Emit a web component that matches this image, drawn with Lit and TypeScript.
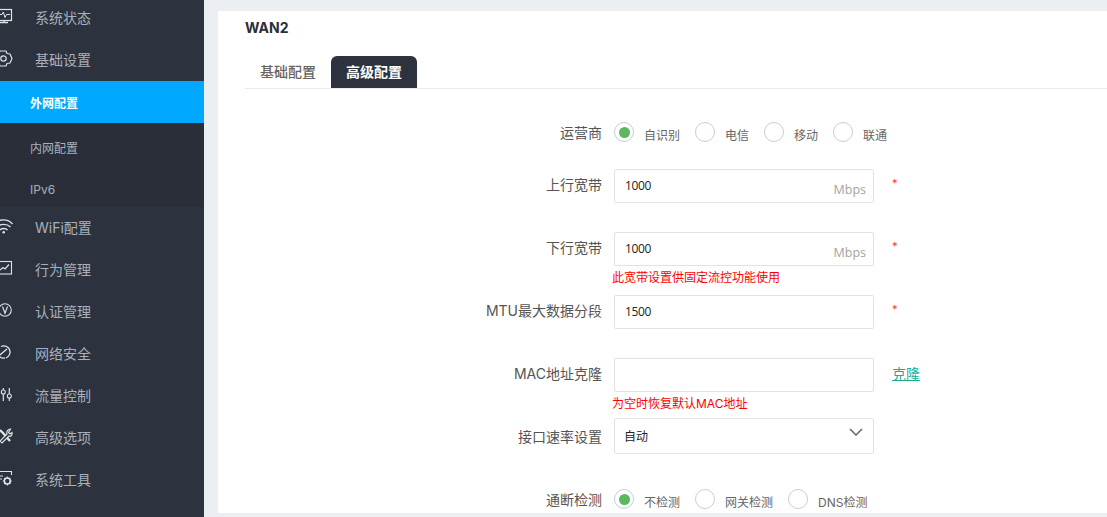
import { LitElement, html, css, svg } from "lit";
import { customElement } from "lit/decorators.js";

const icons: Record<string, unknown> = {
  status: svg`<rect x="-5" y="0.500" width="16.500" height="11" fill="none" stroke="currentColor" stroke-width="1.200"/><path d="M-4 5.500H2L3.300 3 5 8.500 6.500 5.500H10" fill="none" stroke="currentColor"/><path d="M-1 13.500H8M4 12v1.500" stroke="currentColor" stroke-width="1.300" fill="none"/>`,
  gear: svg`<path d="M0 0h6l1 2.500 3 .5 2 4.500-2 4.500-3 .5-1 2.500H0l-1-2.500-3-.5-2-4.500 2-4.500 3-.5z" fill="none" stroke="currentColor" stroke-width="1.200" stroke-linejoin="round"/><circle cx="3.500" cy="7.500" r="2.700" fill="none" stroke="currentColor" stroke-width="1.200"/>`,
  wifi: svg`<path d="M-6 5C-1 -.5 8 -.5 12.500 5M-3 8C0 4.500 7 4.500 10.500 8M0 11C1.500 9 6 9 7.500 11" fill="none" stroke="currentColor" stroke-width="1.300"/><circle cx="3.700" cy="13.200" r="1.300" fill="currentColor"/>`,
  chart: svg`<rect x="-5" y="0.500" width="16.500" height="12.500" fill="none" stroke="currentColor" stroke-width="1.100"/><path d="M0 9L3 6.500 5 8 9 3.500" fill="none" stroke="currentColor" stroke-width="1.200"/>`,
  auth: svg`<circle cx="5" cy="7" r="6.300" fill="none" stroke="currentColor" stroke-width="1.100"/><path d="M2.500 3.500L5 10.300 7.500 3.500" fill="none" stroke="currentColor" stroke-width="1.100"/>`,
  shield: svg`<path d="M1 1.500C5 -.5 10 2.500 10 7c0 3-2 5-4 6" fill="none" stroke="currentColor" stroke-width="1.300"/><path d="M-2 11.500L7 4M-2 6C-3 10 0 14 5 13" fill="none" stroke="currentColor" stroke-width="1.300"/>`,
  flow: svg`<path d="M3.300 1v2M3.300 7v7M9.300 1v6M9.300 11v3" stroke="currentColor" stroke-width="1.200" fill="none"/><circle cx="3.300" cy="5" r="2" fill="none" stroke="currentColor" stroke-width="1.100"/><circle cx="9.300" cy="9" r="2" fill="none" stroke="currentColor" stroke-width="1.100"/>`,
  tools: svg`<path d="M0 1L3 4 10 12" fill="none" stroke="currentColor" stroke-width="2.400"/><path d="M10.500 0C8 0 6 2.500 7 5L0 12 2 14 9 7C11 8 12.500 6 12 3.500L10 5 8.500 3.500z" fill="#2c333f" stroke="currentColor" stroke-width="1.200"/>`,
  sys: svg`<path d="M-5 .5H11.500V4" fill="none" stroke="currentColor" stroke-width="1.100"/><path d="M0 5h3M0 8h2" stroke="currentColor" fill="none"/><circle cx="7.300" cy="10" r="3" fill="none" stroke="currentColor" stroke-width="1.600"/><path d="M7.300 5.500v2M7.300 12.500v2M2.800 10h2M9.800 10h2M4.300 7l1.300 1.300M10.300 7 9 8.300M4.300 13l1.300-1.300M10.300 13 9 11.700" stroke="currentColor" stroke-width="1.100"/>`,
};

@customElement("app-root")
export class AppRoot extends LitElement {
  static styles = css`
    :host {
      display: flex;
      width: 1107px;
      height: 517px;
      overflow: hidden;
      background: #ebeef3;
      font-family: "Inter", "Noto Sans CJK SC", sans-serif;
      font-size: 14px;
      color: #555;
    }
    .side {
      width: 204px;
      flex: none;
      background: #2c333f;
      color: #a9b0bb;
      overflow: hidden;
    }
    .list {
      margin-top: -3px;
    }
    .item {
      box-sizing: border-box;
      height: 42px;
      padding-bottom: 2px;
      display: flex;
      align-items: center;
      gap: 19px;
    }
    .item svg {
      width: 16px;
      height: 16px;
      overflow: visible;
      flex: none;
      color: #dfe2e6;
    }
    .subs {
      box-sizing: border-box;
      background: #292e39;
      height: 84px;
      overflow: hidden;
      padding-top: 3px;
    }
    .sub {
      height: 42px;
      display: flex;
      align-items: center;
      padding-left: 30px;
      font-size: 12px;
    }
    .active {
      height: 42px;
      display: flex;
      align-items: center;
      padding-left: 30px;
      font-size: 12px;
      font-weight: 700;
      color: #fff;
      background: #00a9ff;
    }
    .main {
      flex: 1;
      min-width: 0;
      margin: 11px 0 4px 14px;
      background: #fff;
      padding-left: 27px;
      overflow: hidden;
    }
    h2 {
      margin: 7px 0 0;
      font-size: 14px;
      line-height: 20px;
      font-weight: 700;
      color: #2b2f38;
    }
    .tabs {
      display: flex;
      margin-top: 18px;
      height: 32px;
      border-bottom: 1px solid #eaeaea;
    }
    .tab {
      padding: 0 15px;
      height: 32px;
      line-height: 32px;
      font-weight: 500;
      color: #666;
    }
    .tab.on {
      background: #2c333f;
      color: #fff;
      font-weight: 700;
      border-radius: 6px 6px 0 0;
    }
    .form {
      margin-top: 34px;
    }
    .row {
      display: grid;
      grid-template-columns: 357px 260px auto;
      column-gap: 12px;
      height: 63px;
      align-items: start;
    }
    .row.radios {
      height: 46px;
    }
    .row.sel {
      height: 72px;
    }
    .row.short {
      height: 60px;
    }
    .label {
      text-align: right;
      line-height: 32px;
      color: #555;
    }
    .radios .label {
      line-height: 20px;
    }
    .sel .label {
      line-height: 38px;
    }
    .box {
      position: relative;
      box-sizing: border-box;
      height: 34px;
      border: 1px solid #e3e3e3;
      border-radius: 2px;
      padding-left: 10px;
      font-family: "Open Sans", "Noto Sans CJK SC", sans-serif;
      font-size: 12px;
      letter-spacing: -0.4px;
      line-height: 31px;
      color: #222;
    }
    .unit {
      position: absolute;
      right: 7px;
      top: 4px;
      font-size: 12.500px;
      letter-spacing: 0;
      color: #a3a3a3;
    }
    .sel .box {
      height: 36px;
      line-height: 35px;
      padding-left: 9px;
      letter-spacing: 0;
    }
    .chev {
      position: absolute;
      right: 10px;
      top: 9px;
      width: 14px;
      height: 8px;
    }
    .hint {
      margin: 4px 0 0 -2px;
      font-size: 12px;
      line-height: 16px;
      color: #f00;
      white-space: nowrap;
    }
    .star {
      margin-left: 6px;
      line-height: 28px;
      font-size: 11px;
      color: #f33;
    }
    .clone {
      margin-left: 6px;
      line-height: 32px;
      color: #1aac94;
      text-decoration: underline;
    }
    .group {
      display: flex;
      align-items: flex-start;
      font-size: 12px;
      color: #666;
    }
    .radio {
      box-sizing: border-box;
      width: 20px;
      height: 20px;
      margin-top: -1px;
      border: 1px solid #c6cde0;
      border-radius: 50%;
      display: flex;
      align-items: center;
      justify-content: center;
      flex: none;
    }
    .radio.on::after {
      content: "";
      width: 11px;
      height: 11px;
      border-radius: 50%;
      background: #5cb85c;
    }
    .opt {
      margin: 4px 15px 0 10px;
      line-height: 18px;
      white-space: nowrap;
    }
  `;

  private item(icon: string, name: string) {
    return html`<div class="item"><svg viewBox="0 0 16 16">${icons[icon]}</svg><span>${name}</span></div>`;
  }

  private radios(opts: string[]) {
    return html`<div class="group">
      ${opts.map(
        (o, i) => html`<span class="radio ${i === 0 ? "on" : ""}"></span><span class="opt">${o}</span>`
      )}
    </div>`;
  }

  private field(label: string, value: string, unit: string, hint: string, extra: unknown) {
    return html`<div class="row">
      <div class="label">${label}</div>
      <div>
        <div class="box">${value}${unit ? html`<span class="unit">${unit}</span>` : ""}</div>
        ${hint ? html`<div class="hint">${hint}</div>` : ""}
      </div>
      ${extra}
    </div>`;
  }

  render() {
    const star = html`<span class="star">*</span>`;
    return html`
      <aside class="side">
        <div class="list">
          ${this.item("status", "系统状态")}
          ${this.item("gear", "基础设置")}
          <div class="active">外网配置</div>
          <div class="subs">
            <div class="sub">内网配置</div>
            <div class="sub">IPv6</div>
          </div>
          ${this.item("wifi", "WiFi配置")}
          ${this.item("chart", "行为管理")}
          ${this.item("auth", "认证管理")}
          ${this.item("shield", "网络安全")}
          ${this.item("flow", "流量控制")}
          ${this.item("tools", "高级选项")}
          ${this.item("sys", "系统工具")}
        </div>
      </aside>
      <main class="main">
        <h2>WAN2</h2>
        <div class="tabs">
          <div class="tab">基础配置</div>
          <div class="tab on">高级配置</div>
        </div>
        <div class="form">
          <div class="row radios">
            <div class="label">运营商</div>
            ${this.radios(["自识别", "电信", "移动", "联通"])}
          </div>
          ${this.field("上行宽带", "1000", "Mbps", "", star)}
          ${this.field("下行宽带", "1000", "Mbps", "此宽带设置供固定流控功能使用", star)}
          ${this.field("MTU最大数据分段", "1500", "", "", star)}
          <div class="row short">
            <div class="label">MAC地址克隆</div>
            <div>
              <div class="box"></div>
              <div class="hint">为空时恢复默认MAC地址</div>
            </div>
            <a class="clone">克隆</a>
          </div>
          <div class="row sel">
            <div class="label">接口速率设置</div>
            <div class="box">自动
              <svg class="chev" viewBox="0 0 14 8"><path d="M1 1l6 6 6-6" fill="none" stroke="#666" stroke-width="1.500"/></svg>
            </div>
          </div>
          <div class="row radios">
            <div class="label">通断检测</div>
            ${this.radios(["不检测", "网关检测", "DNS检测"])}
          </div>
        </div>
      </main>
    `;
  }
}
